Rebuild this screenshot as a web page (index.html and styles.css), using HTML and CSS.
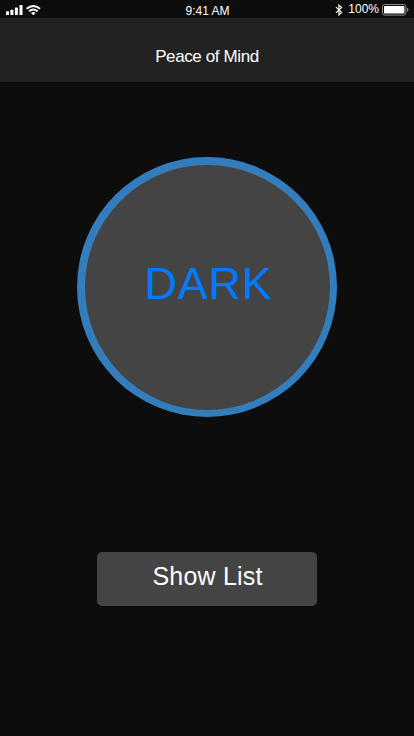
FILE: index.html
```html
<!DOCTYPE html>
<html lang="en">
<head>
<meta charset="utf-8">
<title>Peace of Mind</title>
<link rel="stylesheet" href="styles.css">
</head>
<body>
<div class="status">
  <svg class="signal" width="36" height="12" viewBox="0 0 36 12" fill="#fff">
    <rect x="0" y="7.3" width="3" height="3.7" rx=".6"/>
    <rect x="4.4" y="5.8" width="3" height="5.2" rx=".6"/>
    <rect x="8.9" y="3.6" width="3" height="7.4" rx=".6"/>
    <rect x="13.5" y="1" width="3" height="10" rx=".6"/>
    <g fill="none" stroke="#fff" stroke-width="1.9">
      <path d="M20.6 4.7Q27.3-.9 34 4.7"/>
      <path d="M23 7.2Q27.3 3.7 31.6 7.2"/>
    </g>
    <path d="M25 8.9Q27.3 7.2 29.6 8.9L27.3 11.2Z"/>
  </svg>
  <span class="clock">9:41 AM</span>
  <div class="power">
    <svg class="bluetooth" width="8" height="12" viewBox="0 0 8 12" fill="none" stroke="#fff" stroke-width="1.1"><path d="M1 3.2L6.7 8.5L3.9 11V1L6.7 3.5L1 8.8"/></svg>
    <span class="percent">100%</span>
    <svg class="battery" width="27" height="12" viewBox="0 0 27 12">
      <rect x=".5" y=".5" width="23.4" height="10.6" rx="2.2" fill="none" stroke="#8b8b8b"/>
      <rect x="2" y="2" width="20.4" height="7.6" rx=".9" fill="#fff"/>
      <path d="M25 3.8Q26.5 4.4 26.5 5.8T25 7.8Z" fill="#8b8b8b"/>
    </svg>
  </div>
</div>
<header class="header"><h1 class="title">Peace of Mind</h1></header>
<main class="main">
  <button class="mode">DARK</button>
  <button class="list">Show List</button>
</main>
</body>
</html>
```
FILE: styles.css
```css
* { box-sizing: border-box; }
body {
  margin: 0;
  height: 736px;
  overflow: hidden;
  background: #0d0d0d;
  color: #fff;
  font-family: "Liberation Sans", Arial, sans-serif;
}
button { font-family: inherit; margin: 0; }
.status {
  display: grid;
  grid-template-columns: 1fr auto 1fr;
  height: 18px;
  padding: 0 5px 0 6px;
  font-size: 12px;
  line-height: 14px;
}
.signal { margin-top: 4px; }
.clock { padding-top: 4px; }
.power { display: flex; justify-content: flex-end; }
.bluetooth { margin: 4px 5px 0 0; }
.percent { padding-top: 2px; margin-right: 3px; }
.battery { margin-top: 4px; }
.header {
  height: 64px;
  padding-top: 29px;
  background: #222;
  text-align: center;
}
.title {
  margin: 0;
  font-size: 17px;
  font-weight: 400;
  line-height: 20px;
  letter-spacing: -0.38px;
}
.main {
  display: flex;
  flex-direction: column;
  align-items: center;
  padding-top: 75px;
}
.mode {
  width: 260px;
  height: 260px;
  padding: 0 0 8px 2px;
  border: solid #347dbd;
  border-width: 8px 7px 7px 8px;
  border-radius: 50%;
  background: #444;
  color: #007aff;
  font-size: 45px;
  letter-spacing: 0.8px;
}
.list {
  width: 220px;
  height: 54px;
  margin-top: 135px;
  padding: 0 0 6px 1px;
  border: 0;
  border-radius: 5px;
  background: #444;
  color: #fff;
  font-size: 25px;
  letter-spacing: 0.2px;
}
```
